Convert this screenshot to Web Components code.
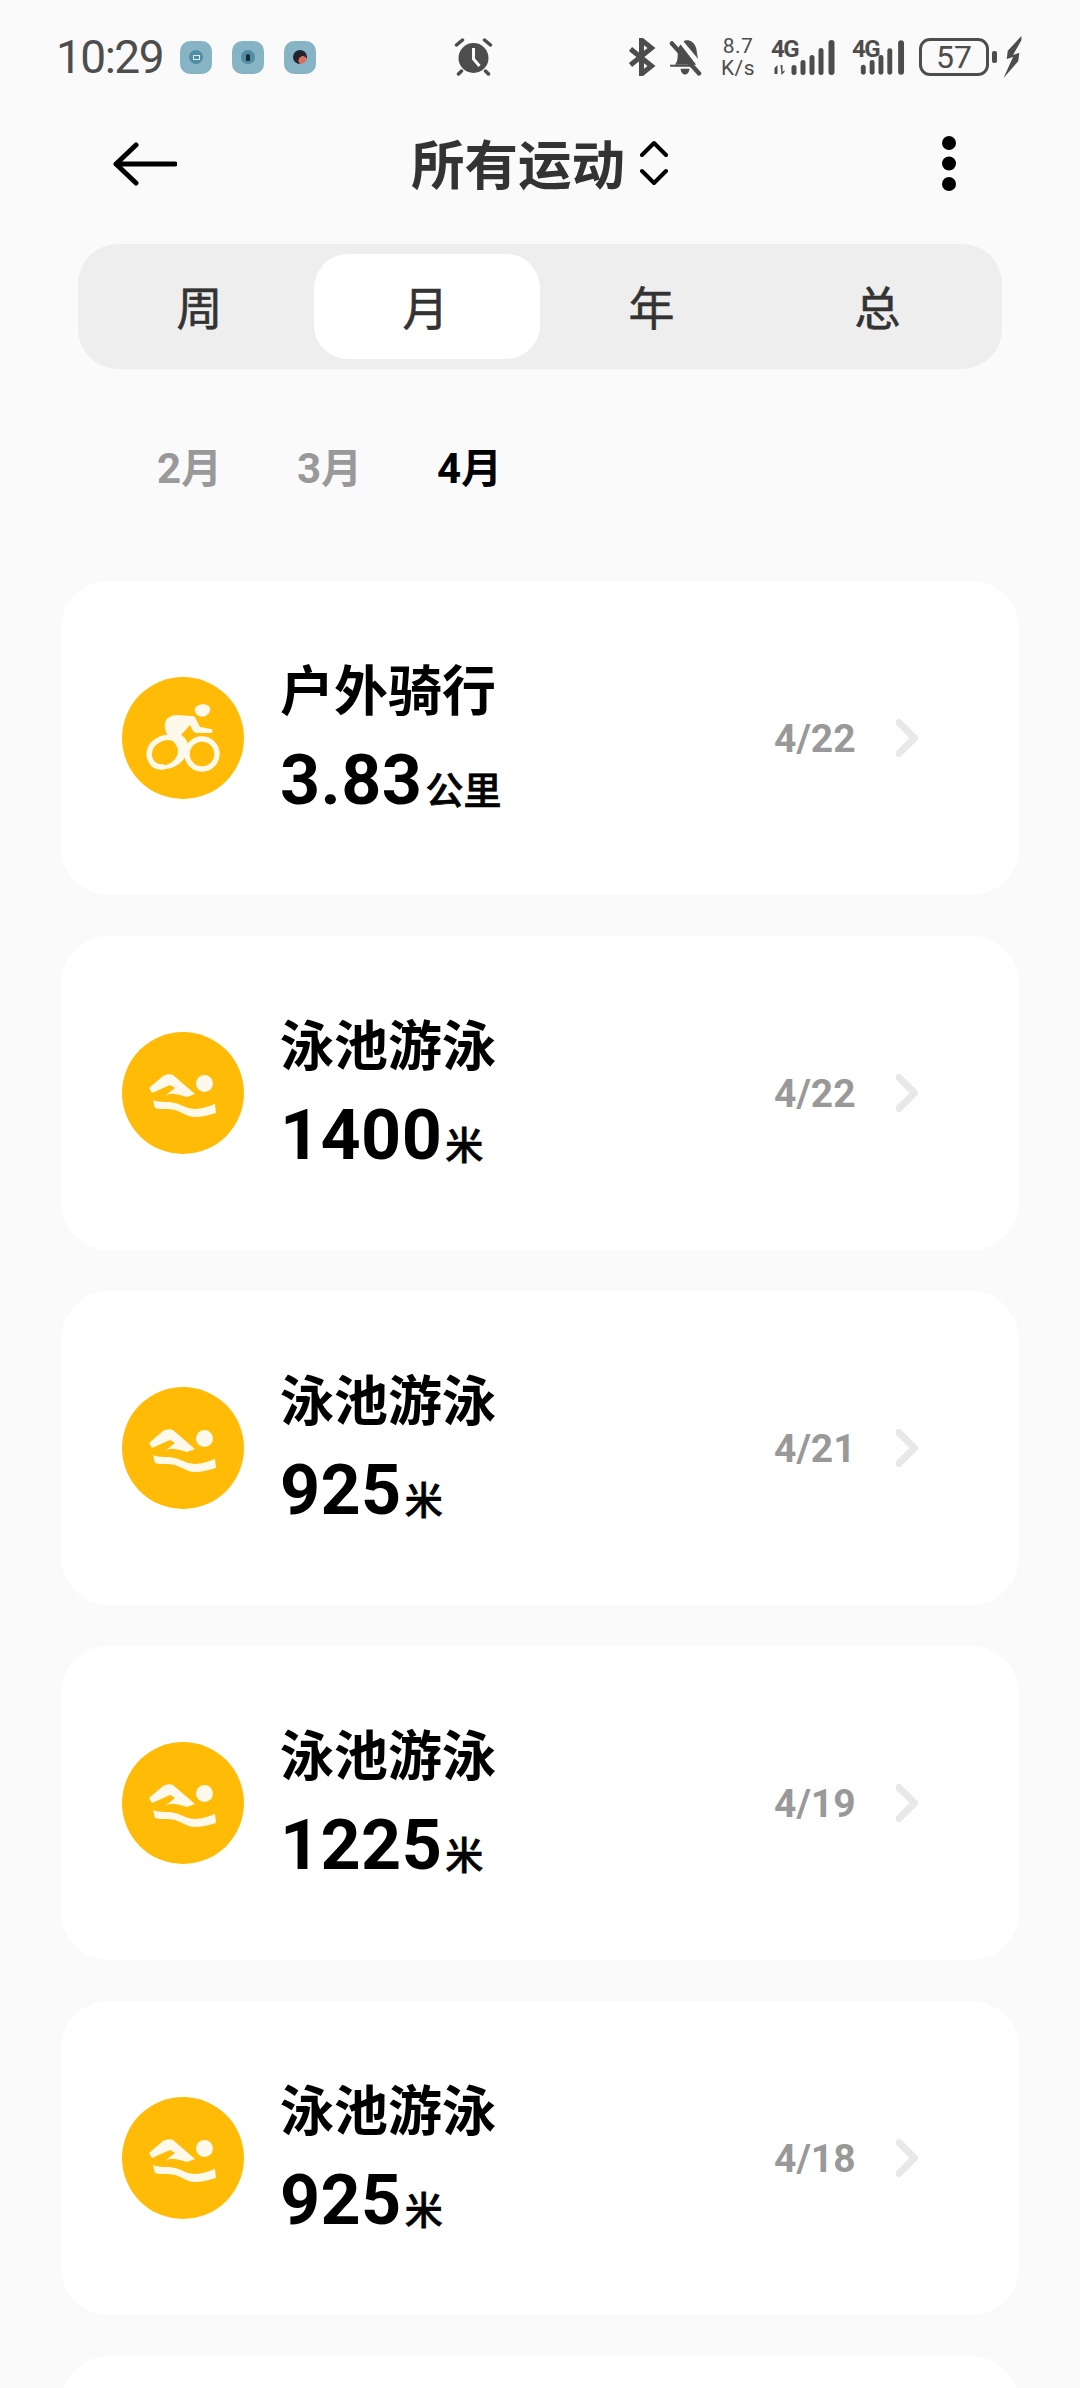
<!DOCTYPE html>
<html lang="zh">
<head>
<meta charset="utf-8">
<title>所有运动</title>
<style>
  html, body { margin: 0; padding: 0; background: #fafafa; }
  html { height: 2388px; overflow: hidden; }
  body {
    width: 1080px; height: 2388px; overflow: hidden;
    font-family: "Noto Sans CJK SC", Roboto, sans-serif;
  }
</style>
</head>
<body>
<status-bar></status-bar>
<nav-header>所有运动</nav-header>
<seg-tabs active="1"></seg-tabs>
<month-tabs></month-tabs>
<sport-list>
  <sport-card kind="bike" date="4/22"><span slot="name">户外骑行</span><span slot="value">3.83</span><span slot="unit">公里</span></sport-card>
  <sport-card kind="swim" date="4/22"><span slot="name">泳池游泳</span><span slot="value">1400</span><span slot="unit">米</span></sport-card>
  <sport-card kind="swim" date="4/21"><span slot="name">泳池游泳</span><span slot="value">925</span><span slot="unit">米</span></sport-card>
  <sport-card kind="swim" date="4/19"><span slot="name">泳池游泳</span><span slot="value">1225</span><span slot="unit">米</span></sport-card>
  <sport-card kind="swim" date="4/18"><span slot="name">泳池游泳</span><span slot="value">925</span><span slot="unit">米</span></sport-card>
  <sport-card></sport-card>
</sport-list>

<script>
const ICONS = {
  bike: `<svg width="122" height="122" viewBox="0 0 122 122">
    <circle cx="61" cy="61" r="61" fill="#ffbb05"/>
    <path d="M73 31C75 28 81 26 85 28 89 30 89 33 87 36 85 39 81 41 77 39 74 38 72 34 73 31z" fill="#fff9ec"/>
    <path d="M43 46C44 41 49 38 55 38L70 39C72 39 73 40 74 42L78 50 89 52C91 52 91 56 89 56L75 56C73 56 72 55 71 54L68 48 59 58C64 61 67 66 66 72 65 82 55 91 44 92 41 92 41 88 44 88 51 86 56 80 56 74 56 69 52 65 48 61 45 58 42 52 43 46z" fill="#fff9ec"/>
    <path d="M50 61C44 59 34 62 29 70 24 80 30 91 41 90" fill="none" stroke="#fff9ec" stroke-width="5.5" stroke-linecap="round"/>
    <circle cx="80" cy="77" r="15" fill="none" stroke="#fff9ec" stroke-width="5.5"/>
  </svg>`,
  swim: `<svg width="122" height="122" viewBox="0 0 122 122">
    <circle cx="61" cy="61" r="61" fill="#ffbb05"/>
    <circle cx="82.5" cy="51.5" r="8.5" fill="#fff9ec"/>
    <path d="M27 56L41 44Q46 41 51 43L73 62 65 65Q59 63 53 62 48 61 43 64L53 56 48 53 30 61z" fill="#fff9ec"/>
    <path d="M31 68C38 71 46 69 53 71 60 73 66 77 73 77 80 77 87 74 93 72L94 81C87 83 80 85 73 85 65 85 60 80 53 78 46 76 39 78 33 76z" fill="#fff9ec"/>
  </svg>`
}

const statusTemplate = document.createElement('template')
statusTemplate.innerHTML = `
  <style>
    :host{
      display: flex;
      align-items: center;
      height: 114px;
      padding-left: 56px;
      box-sizing: border-box;
      color: #4d4d4d;
      font-family: Roboto, "Noto Sans", sans-serif;
    }
    .time{
      font-size: 46px;
      letter-spacing: -1.500px;
      width: 124px;
      line-height: 1;
    }
    .tile{
      width: 32px;
      height: 33px;
      border-radius: 10px;
      background: #86b4c4;
      display: flex;
      align-items: center;
      justify-content: center;
      margin-right: 20px;
    }
    .dot{
      width: 14px;
      height: 14px;
      border-radius: 50%;
      background: #4f8da5;
      display: flex;
      align-items: center;
      justify-content: center;
    }
    .dot i{ display: block; }
    .dot .case{ width: 7px; height: 5px; border: 1px solid #d8eef2; box-sizing: border-box; }
    .dot .pin{ width: 4px; height: 7px; border-radius: 2px 2px 1px 1px; background: #1f2a36; }
    .dot.face{ background: radial-gradient(circle at 70% 75%, #d9705f 0 28%, #22262c 32%); }
    .alarm{ margin-left: 118px; width: 173px; }
    svg{ display: block; }
    .speed{
      width: 38px;
      margin: 0 14px 0 17px;
      font-size: 21px;
      letter-spacing: 0.5px;
      line-height: 22px;
      text-align: center;
    }
    .net{
      position: relative;
      height: 38px;
    }
    .g{
      position: absolute;
      left: 0;
      top: -2px;
      font-size: 24px;
      font-weight: 700;
      line-height: 26px;
      letter-spacing: -1.500px;
    }
    .batt{
      width: 70px;
      height: 38px;
      margin-left: 14px;
      box-sizing: border-box;
      border: 3px solid #4d4d4d;
      border-radius: 11px;
      font-size: 32px;
      line-height: 32px;
      text-align: center;
    }
  </style>
  <span class="time">10:29</span>
  <span class="tile"><span class="dot"><i class="case"></i></span></span>
  <span class="tile"><span class="dot"><i class="pin"></i></span></span>
  <span class="tile"><span class="dot face"></span></span>
  <span class="alarm">
    <svg width="39" height="38" viewBox="0 0 38 38" fill="#4d4d4d">
      <circle cx="19" cy="20" r="15"/>
      <path d="M19 10v11l6 7" fill="none" stroke="#fafafa" stroke-width="3"/>
      <path d="M2 7l6-5M36 7l-6-5M7 33l-3 3M31 33l3 3" stroke="#4d4d4d" stroke-width="3.500" stroke-linecap="round" fill="none"/>
    </svg>
  </span>
  <svg width="29" height="38" viewBox="0 0 26 38" fill="none" stroke="#4d4d4d" stroke-width="5">
    <path d="M2 11l21 17-10 8V2l10 8L2 27"/>
  </svg>
  <svg width="33" height="38" viewBox="0 0 34 38" style="margin-left:13px" fill="#4d4d4d">
    <path d="M6 27c3-3 3-8 3-13 0-4 1-6 3-8l16 21z"/>
    <path d="M15 3c3-3 11-1 13 7 1 4 1 8 2 11z"/>
    <path d="M1 27h20l1 2H2c-1 0-1-1-1-2z"/>
    <path d="M12 31h9c0 3-2 6-4.500 6s-4.500-3-4.500-6z"/>
    <path d="M3 5l28 31" stroke="#4d4d4d" stroke-width="4.500" stroke-linecap="round"/>
  </svg>
  <span class="speed">8.7<br>K/s</span>
  <span class="net">
    <span class="g">4G</span>
    <svg width="65" height="38" viewBox="0 0 64 38" fill="#4d4d4d">
      <path d="M3 30l3-3v9H3zM9 27h2v7l2-2v2l-3 3z"/>
      <rect x="20" y="27" width="5" height="10" rx="2.500"/>
      <rect x="29" y="22" width="5" height="15" rx="2.500"/>
      <rect x="38" y="17" width="5" height="20" rx="2.500"/>
      <rect x="47" y="10" width="5" height="27" rx="2.500"/>
      <rect x="57" y="2" width="6" height="35" rx="3"/>
    </svg>
  </span>
  <span class="net" style="margin-left:16px">
    <span class="g">4G</span>
    <svg width="53" height="38" viewBox="0 0 54 38" fill="#4d4d4d">
      <rect x="9" y="27" width="5" height="10" rx="2.500"/>
      <rect x="18" y="22" width="5" height="15" rx="2.500"/>
      <rect x="27" y="17" width="5" height="20" rx="2.500"/>
      <rect x="36" y="10" width="5" height="27" rx="2.500"/>
      <rect x="47" y="2" width="6" height="35" rx="3"/>
    </svg>
  </span>
  <span class="batt">57</span>
  <svg width="5" height="12" style="margin-left:3px"><rect width="5" height="12" rx="2" fill="#4d4d4d"/></svg>
  <svg width="20" height="42" viewBox="0 0 18 40" style="margin-left:6px" fill="#4d4d4d">
    <path d="M17 0L4 14l-1 8 6-2-9 20 14-16 1-8-6 2 8-14z"/>
  </svg>
`

class StatusBar extends HTMLElement {
  constructor() {
    super()
    this.attachShadow({ mode: 'open' }).append(statusTemplate.content.cloneNode(true))
  }
}

const navTemplate = document.createElement('template')
navTemplate.innerHTML = `
  <style>
    :host{
      display: flex;
      align-items: center;
      height: 102px;
      padding-left: 113px;
      box-sizing: border-box;
    }
    .title{
      width: 212px;
      margin-left: 234px;
      padding-bottom: 6px;
      font-size: 53.5px;
      font-weight: 700;
      color: #333;
      line-height: 1;
      white-space: nowrap;
    }
    .updown{ margin-left: 17px; margin-bottom: 4px; }
    .more{ margin-left: 274px; margin-bottom: 4px; }
    .back{ margin-bottom: 2px; }
    svg{ display: block; }
  </style>
  <svg class="back" width="64" height="44" viewBox="0 0 64 44" fill="none" stroke="#000" stroke-width="5" stroke-linecap="round" stroke-linejoin="round">
    <path d="M23 3L3 22l20 19M3 22h59"/>
  </svg>
  <span class="title"><slot></slot></span>
  <svg class="updown" width="28" height="46" viewBox="0 0 28 46" fill="none" stroke="#000" stroke-width="4" stroke-linecap="round" stroke-linejoin="round">
    <path d="M2 15L14 3l12 12M2 31l12 12 12-12"/>
  </svg>
  <svg class="more" width="14" height="55" viewBox="0 0 14 55" fill="#000">
    <circle cx="7" cy="7" r="7"/><circle cx="7" cy="27.500" r="7"/><circle cx="7" cy="48" r="7"/>
  </svg>
`

class NavHeader extends HTMLElement {
  constructor() {
    super()
    this.attachShadow({ mode: 'open' }).append(navTemplate.content.cloneNode(true))
  }
}

class SegTabs extends HTMLElement {
  constructor() {
    super()
    const active = Number(this.getAttribute('active'))
    const items = ['周', '月', '年', '总'].map((t, i) =>
      `<span class="item${i === active ? ' on' : ''}">${t}</span>`).join('')
    this.attachShadow({ mode: 'open' }).innerHTML = `
      <style>
        :host{
          display: grid;
          grid-template-columns: repeat(4, 226px);
          width: 924px;
          height: 125px;
          margin: 28px 0 0 78px;
          padding: 10px;
          box-sizing: border-box;
          background: #eeeeee;
          border-radius: 40px;
        }
        .item{
          display: flex;
          align-items: center;
          justify-content: center;
          padding: 0 3px 3px 0;
          border-radius: 34px;
          font-size: 46px;
          color: #333;
          line-height: 1;
          -webkit-text-stroke: 0.6px #333;
        }
        .on{ background: #fff; }
      </style>
      ${items}
    `
  }
}

const monthTemplate = document.createElement('template')
monthTemplate.innerHTML = `
  <style>
    :host{
      display: grid;
      grid-template-columns: repeat(3, 140px);
      height: 212px;
      padding: 75px 0 0 157px;
      box-sizing: border-box;
      font-family: Roboto, "Noto Sans CJK SC", sans-serif;
      font-size: 42px;
      font-weight: 700;
      line-height: 42px;
      color: #999;
    }
    .on{ color: #000; }
    .m{ font-family: "Noto Sans CJK SC", sans-serif; font-size: 41px; }
  </style>
  <span>2<span class="m">月</span></span>
  <span>3<span class="m">月</span></span>
  <span class="on">4<span class="m">月</span></span>
`

class MonthTabs extends HTMLElement {
  constructor() {
    super()
    this.attachShadow({ mode: 'open' }).append(monthTemplate.content.cloneNode(true))
  }
}

class SportList extends HTMLElement {
  constructor() {
    super()
    this.attachShadow({ mode: 'open' }).innerHTML = `
      <style>
        :host{
          display: flex;
          flex-direction: column;
          gap: 41px;
          height: 1807px;
          overflow: hidden;
          margin: 0 61px;
        }
      </style>
      <slot></slot>
    `
  }
}

const cardTemplate = document.createElement('template')
cardTemplate.innerHTML = `
  <style>
    :host{
      display: flex;
      flex: none;
      align-items: center;
      height: 314px;
      padding-left: 61px;
      box-sizing: border-box;
      background: #fff;
      border-radius: 48px;
    }
    .icon{ width: 122px; height: 122px; flex: none; }
    .icon svg{ display: block; }
    .body{
      flex: 1;
      margin-left: 36px;
      padding-top: 4px;
      display: flex;
      flex-direction: column;
      color: #000;
    }
    .name{
      font-size: 54px;
      font-weight: 700;
      line-height: 64px;
      white-space: nowrap;
    }
    .line{
      display: flex;
      align-items: baseline;
      margin-top: 24px;
      line-height: 72px;
    }
    .value{
      font-family: Roboto, sans-serif;
      font-size: 70px;
      font-weight: 700;
      letter-spacing: 0.4px;
    }
    .unit{
      font-size: 38px;
      font-weight: 500;
      margin-left: 3px;
      -webkit-text-stroke: 0.7px #000;
    }
    .date{
      font-family: Roboto, sans-serif;
      font-size: 39px;
      font-weight: 700;
      color: #999;
      width: 122px;
      padding-top: 3px;
      line-height: 1;
    }
    .arrow{ margin-right: 101px; display: block; }
  </style>
  <span class="icon"></span>
  <div class="body">
    <div class="name"><slot name="name"></slot></div>
    <div class="line"><span class="value"><slot name="value"></slot></span><span class="unit"><slot name="unit"></slot></span></div>
  </div>
  <span class="date"></span>
  <svg class="arrow" width="22" height="38" viewBox="0 0 22 38" fill="none" stroke="#e8e8e8" stroke-width="7" stroke-linecap="round" stroke-linejoin="round">
    <path d="M3 3.500L18.500 19 3 34.500"/>
  </svg>
`

class SportCard extends HTMLElement {
  constructor() {
    super()
    const shadow = this.attachShadow({ mode: 'open' })
    shadow.append(cardTemplate.content.cloneNode(true))
    const kind = this.getAttribute('kind')
    if (!kind) {
      // the last card is cut off by the bottom of the screen, nothing of it shows
      shadow.querySelector('.arrow').remove()
      return
    }
    shadow.querySelector('.icon').innerHTML = ICONS[kind]
    shadow.querySelector('.date').textContent = this.getAttribute('date')
  }
}

customElements.define('status-bar', StatusBar)
customElements.define('nav-header', NavHeader)
customElements.define('seg-tabs', SegTabs)
customElements.define('month-tabs', MonthTabs)
customElements.define('sport-list', SportList)
customElements.define('sport-card', SportCard)
</script>
</body>
</html>
